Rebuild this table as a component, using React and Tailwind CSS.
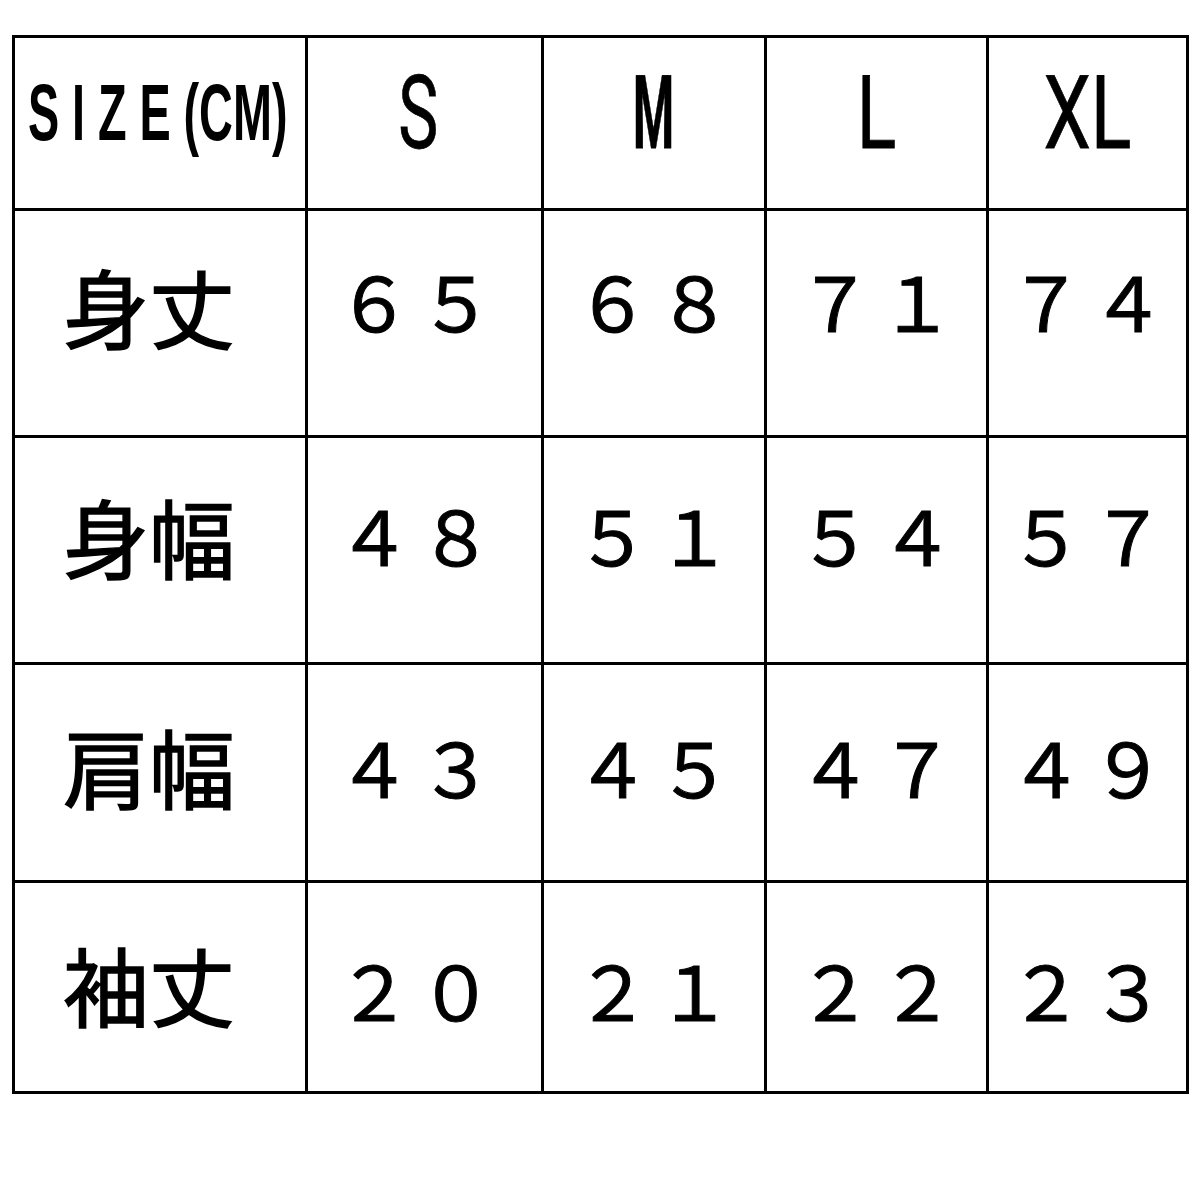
import React from "react";

const cols = [
  { t: "S", s: "scale-x-[0.66] font-normal" },
  { t: "M", s: "scale-x-[0.46] font-bold" },
  { t: "L", s: "scale-x-[0.72] font-normal" },
  { t: "XL", s: "scale-x-[0.74] font-normal" },
];

const rows = [
  { label: "身丈", values: ["６５", "６８", "７１", "７４"], shift: "pb-[34px]", num: "-translate-y-[7px]" },
  { label: "身幅", values: ["４８", "５１", "５４", "５７"], shift: "pb-[28px]", num: "-translate-y-[3px]" },
  { label: "肩幅", values: ["４３", "４５", "４７", "４９"], shift: "pb-[14px]", num: "translate-y-[0px]" },
  { label: "袖丈", values: ["２０", "２１", "２２", "２３"], shift: "pb-[6px]", num: "translate-y-[4px]" },
];

const cell = "flex items-center justify-center border-r-[3px] border-b-[3px] border-black";
const cjk = "font-['Noto_Sans_CJK_JP',sans-serif]";

export default function App() {
  return (
    <div className="min-h-screen bg-white pl-[12px] pt-[35px]">
      <div className="grid w-[1177px] grid-cols-[293px_236px_223px_222px_200px] grid-rows-[173px_227px_227px_218px_211px] border-l-[3px] border-t-[3px] border-black text-black">
        <div className={`${cell} pb-[20px] pr-[4px]`}>
          <span className="inline-block scale-x-[0.585] whitespace-nowrap font-['Liberation_Sans',sans-serif] text-[80px] font-bold leading-none">
            <span className="tracking-[22px]">SIZE</span>
            <span>(CM)</span>
          </span>
        </div>
        {cols.map((c, i) => (
          <div key={c.t} className={`${cell} pb-[20px] ${i === 0 ? "pr-[12px]" : ""}`}>
            <span className={`inline-block ${c.s} font-['Roboto',sans-serif] text-[102px] leading-none [-webkit-text-stroke:0.8px_black]`}>
              {c.t}
            </span>
          </div>
        ))}

        {rows.map((r) => (
          <React.Fragment key={r.label}>
            <div className={`${cell} ${r.shift} pr-[22px]`}>
              <span className={`${cjk} text-[86px] font-normal leading-none [-webkit-text-stroke:1.5px_black]`}>{r.label}</span>
            </div>
            {r.values.map((v, i) => (
              <div key={i} className={`${cell} ${r.shift} ${i === 0 ? "pr-[12px]" : "pl-[6px]"}`}>
                <span className={`${cjk} ${r.num} inline-block text-[75px] tracking-[7px] leading-none [-webkit-text-stroke:1px_black]`}>{v}</span>
              </div>
            ))}
          </React.Fragment>
        ))}
      </div>
    </div>
  );
}
